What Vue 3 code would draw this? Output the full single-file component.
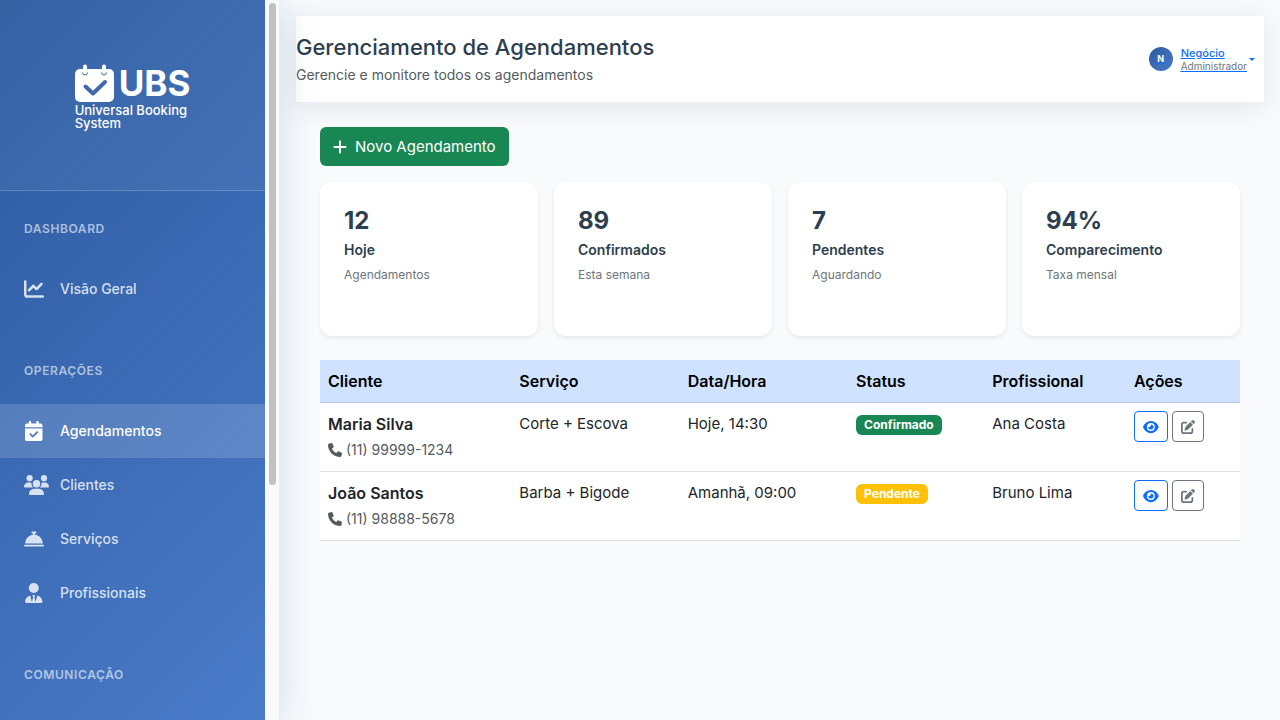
<script setup>
const icons = {
  chart: { w: 512, d: 'M64 64c0-17.7-14.3-32-32-32S0 46.3 0 64V400c0 44.2 35.8 80 80 80H480c17.7 0 32-14.3 32-32s-14.3-32-32-32H80c-8.8 0-16-7.2-16-16V64zm406.6 86.6c12.5-12.5 12.5-32.8 0-45.3s-32.8-12.5-45.3 0L320 210.7l-57.4-57.4c-12.5-12.5-32.8-12.5-45.3 0l-112 112c-12.5 12.5-12.5 32.8 0 45.3s32.8 12.5 45.3 0L240 221.3l57.4 57.4c12.5 12.5 32.8 12.5 45.3 0l128-128z' },
  calendar: { w: 448, d: 'M128 0c17.7 0 32 14.3 32 32V64H288V32c0-17.7 14.3-32 32-32s32 14.3 32 32V64h48c26.5 0 48 21.5 48 48v48H0V112C0 85.5 21.5 64 48 64H96V32c0-17.7 14.3-32 32-32zM0 192H448V464c0 26.5-21.5 48-48 48H48c-26.5 0-48-21.5-48-48V192zM329 305c9.4-9.4 9.4-24.6 0-33.9s-24.6-9.4-33.9 0l-95 95-47-47c-9.4-9.4-24.6-9.4-33.9 0s-9.4 24.6 0 33.9l64 64c9.4 9.4 24.6 9.4 33.9 0L329 305z' },
  users: { w: 640, d: 'M144 0a80 80 0 1 1 0 160A80 80 0 1 1 144 0zM512 0a80 80 0 1 1 0 160A80 80 0 1 1 512 0zM0 298.7C0 239.8 47.8 192 106.7 192h42.7c15.9 0 31 3.5 44.6 9.7c-1.3 7.2-1.9 14.7-1.9 22.3c0 38.2 16.8 72.5 43.3 96c-.2 0-.4 0-.7 0H21.3C9.6 320 0 310.4 0 298.7zM405.3 320c-.2 0-.4 0-.7 0c26.6-23.5 43.3-57.8 43.3-96c0-7.6-.7-15-1.9-22.3c13.6-6.3 28.7-9.7 44.6-9.7h42.7C592.2 192 640 239.8 640 298.7c0 11.8-9.6 21.3-21.3 21.3H405.3zM224 224a96 96 0 1 1 192 0 96 96 0 1 1 -192 0zM128 485.3C128 411.7 187.7 352 261.3 352H378.7C452.3 352 512 411.7 512 485.3c0 14.7-11.9 26.7-26.7 26.7H154.7c-14.7 0-26.7-11.9-26.7-26.7z' },
  bell: { w: 512, d: 'M216 64c-13.3 0-24 10.7-24 24s10.7 24 24 24h16v33.3C119.6 157.2 32 252.4 32 368H480c0-115.6-87.6-210.8-200-222.7V112h16c13.3 0 24-10.7 24-24s-10.7-24-24-24H256 216zM24 400c-13.3 0-24 10.7-24 24s10.7 24 24 24H488c13.3 0 24-10.7 24-24s-10.7-24-24-24H24z' },
  tie: { w: 448, d: 'M96 128a128 128 0 1 0 256 0A128 128 0 1 0 96 128zm94.5 200.2l18.6 31L175.8 483.1l-36-146.9c-2-8.1-9.8-13.4-17.9-11.3C51.9 342.4 0 405.8 0 481.3c0 17 13.8 30.7 30.7 30.7H162.5c0 0 0 0 .1 0H168 280h5.5c0 0 0 0 .1 0H417.3c17 0 30.7-13.8 30.7-30.7c0-75.5-51.9-138.9-121.9-156.4c-8.1-2-15.9 3.3-17.9 11.3l-36 146.9L238.9 359.2l18.6-31c6.4-10.7-1.3-24.2-13.7-24.2H224 204.3c-12.4 0-20.1 13.6-13.7 24.2z' },
}

const sections = [
  { title: 'Dashboard', items: [{ label: 'Visão Geral', icon: icons.chart }] },
  {
    title: 'Operações',
    items: [
      { label: 'Agendamentos', icon: icons.calendar, active: true },
      { label: 'Clientes', icon: icons.users, wide: true },
      { label: 'Serviços', icon: icons.bell },
      { label: 'Profissionais', icon: icons.tie },
    ],
  },
  { title: 'Comunicação', items: [] },
]

const stats = [
  { value: '12', label: 'Hoje', note: 'Agendamentos' },
  { value: '89', label: 'Confirmados', note: 'Esta semana' },
  { value: '7', label: 'Pendentes', note: 'Aguardando' },
  { value: '94%', label: 'Comparecimento', note: 'Taxa mensal' },
]

const columns = ['Cliente', 'Serviço', 'Data/Hora', 'Status', 'Profissional', 'Ações']

const rows = [
  { name: 'Maria Silva', phone: '(11) 99999-1234', service: 'Corte + Escova', when: 'Hoje, 14:30', status: 'Confirmado', kind: 'ok', pro: 'Ana Costa' },
  { name: 'João Santos', phone: '(11) 98888-5678', service: 'Barba + Bigode', when: 'Amanhã, 09:00', status: 'Pendente', kind: 'wait', pro: 'Bruno Lima' },
]
</script>

<template>
  <div class="layout">
    <aside class="sidebar">
      <div class="panel">
        <div class="brand">
          <div class="logo">
            <div class="logo-top">
              <svg class="logo-mark" viewBox="0 0 39 38" aria-hidden="true">
                <rect x="0" y="5" width="39" height="33" rx="5" fill="#fff" />
                <path d="M7.500 8.500a2.500 2.500 0 0 0 5 0M26.500 8.500a2.500 2.500 0 0 0 5 0" fill="none" stroke="#3f69a9" stroke-width="1" />
                <path d="M10 2.500v5M29 2.500v5" stroke="#fff" stroke-width="4" stroke-linecap="round" />
                <path d="M10.500 22.500l7.500 7L30 18" fill="none" stroke="#3f69a9" stroke-width="4" stroke-linecap="round" stroke-linejoin="round" />
              </svg>
              <span class="logo-name">UBS</span>
            </div>
            <div class="logo-sub">Universal Booking<br>System</div>
          </div>
        </div>
        <nav class="nav">
          <section v-for="s in sections" :key="s.title" class="group">
            <h2 class="group-title">{{ s.title }}</h2>
            <a v-for="i in s.items" :key="i.label" href="#" class="item" :class="{ active: i.active }">
              <span class="item-icon">
                <svg :viewBox="`0 0 ${i.icon.w} 512`" :class="{ wide: i.wide }" aria-hidden="true"><path :d="i.icon.d" fill="currentColor" /></svg>
              </span>
              <span>{{ i.label }}</span>
            </a>
          </section>
        </nav>
      </div>
      <div class="track"><div class="thumb"></div></div>
    </aside>

    <main class="main">
      <header class="topbar">
        <div>
          <h1 class="title">Gerenciamento de Agendamentos</h1>
          <p class="subtitle">Gerencie e monitore todos os agendamentos</p>
        </div>
        <a href="#" class="user">
          <span class="avatar">N</span>
          <span class="who">
            <span class="who-name">Negócio</span>
            <span class="who-role">Administrador</span>
          </span>
          <span class="caret"></span>
        </a>
      </header>

      <div class="content">
        <button type="button" class="new">
          <svg viewBox="0 0 448 512" aria-hidden="true"><path fill="currentColor" d="M256 80c0-17.700-14.300-32-32-32s-32 14.300-32 32V224H48c-17.700 0-32 14.300-32 32s14.300 32 32 32H192V432c0 17.700 14.300 32 32 32s32-14.300 32-32V288H400c17.700 0 32-14.300 32-32s-14.300-32-32-32H256V80z" /></svg>
          <span>Novo Agendamento</span>
        </button>

        <div class="stats">
          <article v-for="s in stats" :key="s.label" class="card">
            <div class="card-value">{{ s.value }}</div>
            <div class="card-label">{{ s.label }}</div>
            <div class="card-note">{{ s.note }}</div>
          </article>
        </div>

        <table class="table">
          <thead>
            <tr><th v-for="c in columns" :key="c" scope="col">{{ c }}</th></tr>
          </thead>
          <tbody>
            <tr v-for="r in rows" :key="r.name">
              <td>
                <strong>{{ r.name }}</strong>
                <div class="phone">
                  <svg viewBox="0 0 512 512" aria-hidden="true"><path fill="currentColor" d="M164.900 24.600c-7.700-18.600-28-28.500-47.400-23.200l-88 24C12.100 30.200 0 46 0 64C0 311.400 200.600 512 448 512c18 0 33.800-12.100 38.600-29.500l24-88c5.300-19.400-4.600-39.700-23.200-47.400l-96-40c-16.300-6.800-35.200-2.100-46.300 11.600L304.700 368C234.300 334.700 177.300 277.700 144 207.300L193.300 167c13.700-11.200 18.400-30 11.600-46.300l-40-96z" /></svg>
                  <span>{{ r.phone }}</span>
                </div>
              </td>
              <td>{{ r.service }}</td>
              <td>{{ r.when }}</td>
              <td><span class="badge" :class="r.kind">{{ r.status }}</span></td>
              <td>{{ r.pro }}</td>
              <td>
                <div class="actions">
                  <button type="button" class="act view" aria-label="Ver">
                    <svg viewBox="0 0 576 512" aria-hidden="true"><path fill="currentColor" d="M288 32c-80.800 0-145.500 36.800-192.600 80.600C48.600 156 17.300 208 2.500 243.700c-3.300 7.900-3.300 16.700 0 24.600C17.300 304 48.600 356 95.400 399.400C142.500 443.200 207.200 480 288 480s145.500-36.800 192.600-80.600c46.800-43.500 78.100-95.400 93-131.100c3.300-7.900 3.300-16.700 0-24.600c-14.900-35.700-46.200-87.700-93-131.100C433.500 68.800 368.800 32 288 32zM144 256a144 144 0 1 1 288 0 144 144 0 1 1 -288 0zm144-64c0 35.300-28.700 64-64 64c-7.100 0-13.900-1.200-20.300-3.300c-5.500-1.800-11.900 1.600-11.700 7.400c.3 6.900 1.300 13.800 3.200 20.700c13.700 51.200 66.400 81.600 117.600 67.900s81.600-66.400 67.900-117.600c-11.100-41.500-47.800-69.400-88.600-71.100c-5.800-.2-9.200 6.100-7.400 11.700c2.100 6.400 3.300 13.200 3.300 20.300z" /></svg>
                  </button>
                  <button type="button" class="act edit" aria-label="Editar">
                    <svg viewBox="0 0 512 512" aria-hidden="true"><path fill="currentColor" d="M471.600 21.700c-21.900-21.900-57.300-21.900-79.200 0L362.300 51.700l97.900 97.900 30.100-30.100c21.900-21.900 21.900-57.300 0-79.200L471.600 21.700zm-299.200 220c-6.100 6.100-10.800 13.600-13.500 21.900l-29.600 88.800c-2.900 8.600-.6 18.100 5.800 24.600s15.900 8.700 24.600 5.800l88.800-29.600c8.200-2.700 15.700-7.400 21.900-13.500L437.700 172.300 339.700 74.300 172.400 241.700zM96 64C43 64 0 107 0 160V416c0 53 43 96 96 96H352c53 0 96-43 96-96V320c0-17.700-14.300-32-32-32s-32 14.300-32 32v96c0 17.700-14.300 32-32 32H96c-17.700 0-32-14.300-32-32V160c0-17.700 14.300-32 32-32h96c17.700 0 32-14.300 32-32s-14.300-32-32-32H96z" /></svg>
                  </button>
                </div>
              </td>
            </tr>
          </tbody>
        </table>
      </div>
    </main>
  </div>
</template>

<style>
body {
  margin: 0;
  background: #f8f9fa;
}
</style>

<style scoped>
.layout {
  display: flex;
  height: 100vh;
  overflow: hidden;
  background: #f8fafc;
  font-family: Inter, "Liberation Sans", sans-serif;
  font-size: 15px;
  line-height: 24px;
  color: #212529;
}
.layout * {
  box-sizing: border-box;
}
.sidebar {
  position: relative;
  z-index: 1;
  display: flex;
  flex: 0 0 280px;
  box-shadow: 4px 0 32px rgba(44, 90, 160, 0.15);
}
.panel {
  flex: 1;
  overflow: hidden;
  background: linear-gradient(135deg, #2c5aa0 0%, #4a7bc8 100%);
  color: #fff;
}
.track {
  width: 15px;
  padding: 3px 3px 3px 4px;
  background: #fafafa;
  border-right: 1px solid #ededed;
}
.thumb {
  height: 67.5%;
  border-radius: 4px;
  background: #c1c1c1;
}
.brand {
  display: flex;
  justify-content: center;
  height: 191px;
  padding-top: 64px;
  background: rgba(255, 255, 255, 0.05);
  border-bottom: 1px solid rgba(255, 255, 255, 0.2);
}
.logo-top {
  display: flex;
  align-items: center;
  gap: 5px;
}
.logo-mark {
  width: 39px;
  height: 38px;
}
.logo-name {
  font-size: 35px;
  line-height: 38px;
  font-weight: 700;
}
.logo-sub {
  margin-top: 2px;
  font-size: 13px;
  line-height: 13px;
  font-weight: 500;
}
.nav {
  padding-top: 28px;
}
.group {
  margin-bottom: 45px;
}
.group-title {
  margin: 0 0 23px;
  padding: 0 24px;
  font-size: 12px;
  line-height: 20px;
  font-weight: 600;
  letter-spacing: 0.05em;
  text-transform: uppercase;
  color: rgba(255, 255, 255, 0.6);
}
.item {
  display: flex;
  align-items: center;
  gap: 16px;
  height: 54px;
  padding: 0 24px;
  font-size: 14px;
  font-weight: 500;
  color: rgba(255, 255, 255, 0.8);
  text-decoration: none;
}
.item.active {
  background: rgba(255, 255, 255, 0.15);
  color: #fff;
}
.item-icon {
  display: flex;
  justify-content: center;
  width: 20px;
}
.item-icon svg {
  flex: none;
  height: 20px;
}
.item-icon svg.wide {
  margin-right: -5px;
}
.main {
  flex: 1;
  min-width: 0;
  padding: 16px;
}
.topbar {
  display: flex;
  justify-content: space-between;
  align-items: center;
  height: 87px;
  background: #fff;
  border-bottom: 1px solid #eef1f5;
  box-shadow: 0 4px 24px rgba(44, 62, 80, 0.1);
}
.title {
  margin: 0;
  font-size: 22px;
  line-height: 32px;
  font-weight: 500;
  color: #2c3e50;
}
.subtitle {
  margin: 0;
  font-size: 14px;
  color: #555b61;
}
.user {
  display: flex;
  align-items: center;
  padding-right: 9px;
  color: #0d6efd;
}
.avatar {
  width: 24px;
  height: 24px;
  margin-right: 8px;
  border-radius: 50%;
  background: linear-gradient(135deg, #2c5aa0, #4a7bc8);
  color: #fff;
  font-size: 9px;
  line-height: 24px;
  font-weight: 700;
  text-align: center;
}
.who {
  display: flex;
  flex-direction: column;
  align-items: flex-start;
}
.who-name {
  font-size: 11px;
  line-height: 14px;
  font-weight: 500;
  text-decoration: underline;
}
.who-role {
  font-size: 10px;
  line-height: 13px;
  color: #6c757d;
  text-decoration: underline #0d6efd;
}
.caret {
  margin-left: 2px;
  border: 3px solid transparent;
  border-top-color: currentColor;
  border-bottom: 0;
}
.content {
  padding: 24px;
}
.new {
  display: flex;
  align-items: center;
  gap: 8px;
  height: 39px;
  margin-bottom: 16px;
  padding: 0 13px;
  border: 0;
  border-radius: 6px;
  background: #198754;
  color: #fff;
  font: inherit;
}
.new svg {
  width: 14px;
  height: 16px;
}
.stats {
  display: grid;
  grid-template-columns: repeat(4, 1fr);
  gap: 16px;
  margin-bottom: 24px;
}
.card {
  height: 154px;
  padding: 24px;
  border-radius: 12px;
  background: #fff;
  box-shadow: 0 2px 4px rgba(0, 0, 0, 0.08);
}
.card-value {
  font-size: 24px;
  line-height: 30px;
  font-weight: 700;
  color: #2c3e50;
}
.card-label {
  margin-top: 2px;
  font-size: 14px;
  font-weight: 600;
  color: #2c3e50;
}
.card-note {
  margin-top: 1px;
  font-size: 12px;
  color: #6c757d;
}
.table {
  width: 100%;
  table-layout: fixed;
  border-collapse: separate;
  border-spacing: 0;
  background: #fff;
}
.table th {
  padding: 9px 8px;
  background: #cfe2ff;
  border-bottom: 1px solid #b3c7e6;
  color: #000;
  font-size: 16px;
  font-weight: 600;
  text-align: left;
}
.table th:nth-child(1) { width: 20.8%; }
.table th:nth-child(2) { width: 18.3%; }
.table th:nth-child(3) { width: 18.3%; }
.table th:nth-child(4) { width: 14.8%; }
.table th:nth-child(5) { width: 15.4%; }
.table td {
  height: 68px;
  padding: 8px;
  border-bottom: 1px solid #dee2e6;
  line-height: 26px;
  vertical-align: top;
}
.table strong {
  display: block;
  font-size: 16px;
  font-weight: 600;
}
.phone {
  display: flex;
  align-items: center;
  gap: 4px;
  font-size: 14px;
  color: #555b61;
}
.phone svg {
  width: 14px;
  height: 14px;
}
.badge {
  display: inline-block;
  padding: 0 8px;
  border-radius: 6px;
  color: #fff;
  font-size: 12px;
  line-height: 20px;
  font-weight: 700;
}
.badge.ok { background: #198754; }
.badge.wait { background: #ffc107; }
.actions {
  display: flex;
  gap: 4px;
}
.act {
  display: flex;
  align-items: center;
  padding: 0 8px;
  height: 31px;
  border: 1px solid currentColor;
  border-radius: 4px;
  background: transparent;
}
.act svg {
  height: 14px;
}
.view { color: #0d6efd; }
.edit { color: #6c757d; }
</style>
